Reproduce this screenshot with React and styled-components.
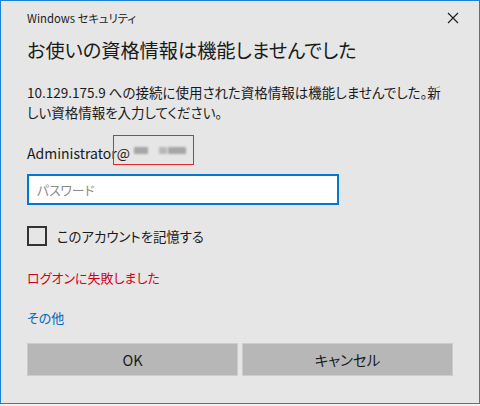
import styled, { createGlobalStyle } from 'styled-components';

const GlobalStyle = createGlobalStyle`
  html, body {
    margin: 0;
    padding: 0;
    background: #f0f0f0;
  }
  body {
    font-family: "Noto Sans CJK JP", "Noto Sans", sans-serif;
    font-feature-settings: "palt";
    -webkit-font-smoothing: antialiased;
  }
`;

const Window = styled.div`
  box-sizing: border-box;
  width: 480px;
  height: 404px;
  border: 1px solid #1883d7;
  background: #e6e6e6;
  display: flex;
  flex-direction: column;
  padding: 0 26px;
`;

const TitleBar = styled.div`
  height: 36px;
  display: flex;
  align-items: center;
  justify-content: space-between;
  font-size: 11.3px;
  color: #1a1a1a;
  margin-top: -1px;
`;

const CloseButton = styled.button`
  border: none;
  background: transparent;
  padding: 0;
  margin-right: -10px;
  width: 20px;
  height: 20px;
  display: flex;
  align-items: center;
  justify-content: center;
  cursor: pointer;
`;

const Heading = styled.h1`
  margin: 0;
  font-size: 19.2px;
  font-weight: 400;
  color: #1a1a1a;
  line-height: 28px;
`;

const Message = styled.p`
  margin: 18px 0 0;
  max-width: 415px;
  font-size: 13.5px;
  line-height: 20px;
  color: #1a1a1a;
`;

const UserRow = styled.div`
  position: relative;
  margin-top: 20px;
  font-size: 14px;
  line-height: 22px;
  color: #1a1a1a;
  height: 22px;
`;

const Redaction = styled.div`
  position: absolute;
  left: 86px;
  top: -7px;
  width: 81px;
  height: 30px;
  border: 1.5px solid #e8262a;
  box-sizing: border-box;
`;

const Smudge = styled.span`
  position: absolute;
  top: 11px;
  height: 7px;
  background: #8c8c8c;
  filter: blur(1.2px);
  opacity: 0.7;
`;

const PasswordInput = styled.input`
  box-sizing: border-box;
  margin-top: 10px;
  width: 312px;
  height: 31px;
  border: 2px solid #0078d7;
  background: #fff;
  padding: 0 8px;
  font-family: inherit;
  font-feature-settings: "palt";
  font-size: 12.8px;
  color: #1a1a1a;
  outline: none;
  caret-color: #000;

  &::placeholder {
    color: #8a8a8a;
  }
`;

const CheckRow = styled.label`
  display: flex;
  align-items: center;
  gap: 10px;
  margin-top: 21px;
  height: 20px;
  font-size: 13.4px;
  line-height: 20px;
  color: #1a1a1a;
`;

const Box = styled.span`
  box-sizing: border-box;
  width: 20px;
  height: 20px;
  border: 2px solid #333;
  background: transparent;
`;

const ErrorText = styled.div`
  margin-top: 22px;
  font-size: 13px;
  line-height: 20px;
  color: #d0021b;
`;

const MoreLink = styled.a`
  margin-top: 20px;
  font-size: 13px;
  line-height: 20px;
  color: #0067c0;
  text-decoration: none;
  align-self: flex-start;
`;

const ButtonRow = styled.div`
  display: grid;
  grid-template-columns: 1fr 1fr;
  gap: 4px;
  margin-top: 15px;
`;

const Button = styled.button`
  height: 33px;
  border: 1px solid #cccccc;
  background: #b7b7b7;
  font-family: inherit;
  font-feature-settings: "palt";
  font-size: 14.5px;
  color: #1a1a1a;
  cursor: pointer;
`;

export default function App() {
  return (
    <>
      <GlobalStyle />
      <Window>
        <TitleBar>
          <span>Windows セキュリティ</span>
          <CloseButton aria-label="閉じる">
            <svg width="12" height="12" viewBox="0 0 12 12">
              <path d="M1 1 L11 11 M11 1 L1 11" stroke="#1a1a1a" strokeWidth="1.1" />
            </svg>
          </CloseButton>
        </TitleBar>
        <Heading>お使いの資格情報は機能しませんでした</Heading>
        <Message>
          10.129.175.9 への接続に使用された資格情報は機能しませんでした。新しい資格情報を入力してください。
        </Message>
        <UserRow>
          Administrator@
          <Redaction>
            <Smudge style={{ left: 20, width: 14 }} />
            <Smudge style={{ left: 45, width: 8, opacity: 0.5 }} />
            <Smudge style={{ left: 54, width: 18 }} />
          </Redaction>
        </UserRow>
        <PasswordInput type="password" placeholder="パスワード" />
        <CheckRow>
          <Box />
          このアカウントを記憶する
        </CheckRow>
        <ErrorText>ログオンに失敗しました</ErrorText>
        <MoreLink href="#">その他</MoreLink>
        <ButtonRow>
          <Button>OK</Button>
          <Button>キャンセル</Button>
        </ButtonRow>
      </Window>
    </>
  );
}
